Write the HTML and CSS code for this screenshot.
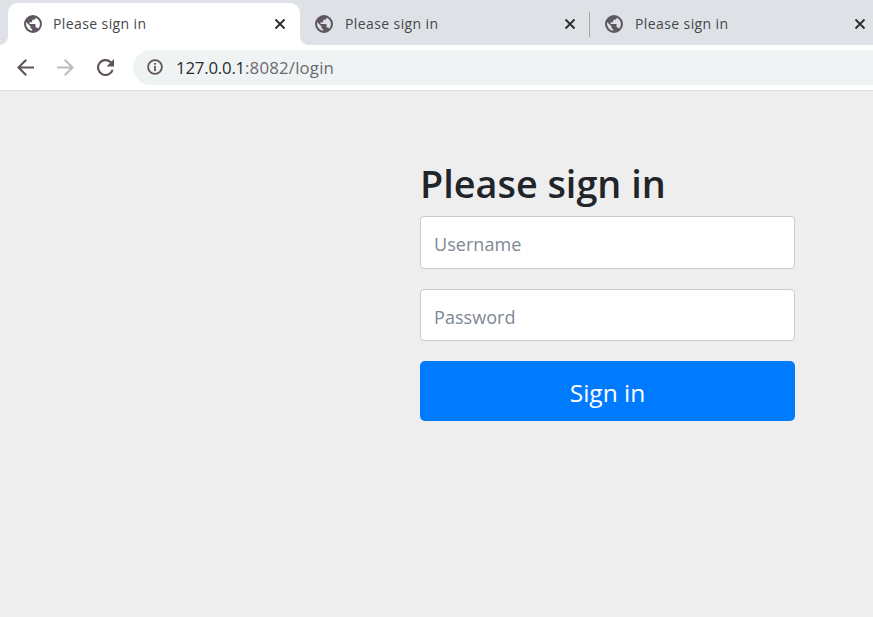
FILE: index.html
```html
<!DOCTYPE html>
<html lang="en">

<head>
    <meta charset="UTF-8">
    <meta name="viewport" content="width=device-width, initial-scale=1.0">
    <title>Please sign in</title>
    <link rel="stylesheet" href="styles.css">
</head>

<body>
    <svg class="defs" width="0" height="0">
        <symbol id="globe" viewBox="0 0 16 16">
            <path fill-rule="evenodd" d="M8 0a8 8 0 1 0 0 16A8 8 0 0 0 8 0zM1.800 8c0-.6.1-1.100.2-1.600L5.700 10.100v.8c0 .9.7 1.500 1.500 1.500v1.500A6.200 6.200 0 0 1 1.800 8zm10.800 4.200c-.2-.6-.8-1.100-1.500-1.100h-.8V8.800c0-.4-.3-.8-.8-.8H5.000V6.500h1.500c.4 0 .8-.3.8-.8V4.200h1.500c.9 0 1.500-.7 1.500-1.500v-.3a6.200 6.200 0 0 1 2.300 9.800z"/>
        </symbol>
        <symbol id="close" viewBox="0 0 12 12">
            <path d="M1.500 1.500l9 9M10.500 1.500l-9 9" fill="none" stroke="currentColor" stroke-width="1.800"/>
        </symbol>
    </svg>

    <div class="tabstrip">
        <div class="tab tab-active">
            <svg class="favicon"><use href="#globe"/></svg>
            <span class="tab-title">Please sign in</span>
            <svg class="tab-close"><use href="#close"/></svg>
        </div>
        <div class="tab tab-second">
            <svg class="favicon"><use href="#globe"/></svg>
            <span class="tab-title">Please sign in</span>
            <svg class="tab-close"><use href="#close"/></svg>
        </div>
        <div class="tab-sep"></div>
        <div class="tab tab-third">
            <svg class="favicon"><use href="#globe"/></svg>
            <span class="tab-title">Please sign in</span>
            <svg class="tab-close"><use href="#close"/></svg>
        </div>
    </div>

    <div class="toolbar">
        <svg class="nav-icon" viewBox="0 0 16 16"><path d="M16 7H3.800l5.600-5.600L8 0 0 8l8 8 1.400-1.400L3.800 9H16z" fill="#5f5559"/></svg>
        <svg class="nav-icon nav-forward" viewBox="0 0 16 16"><path d="M0 7h12.200L6.600 1.400 8 0l8 8-8 8-1.400-1.400L12.200 9H0z" fill="#bdbdbd"/></svg>
        <svg class="nav-icon nav-reload" viewBox="0 0 16 16"><path d="M13.650 2.350A8 8 0 1 0 15.740 10h-2.080a6 6 0 1 1-1.420-6.240L9 7h7V0z" fill="#5f5559"/></svg>
        <div class="omnibox">
            <svg class="info-icon" viewBox="0 0 16 16">
                <circle cx="8" cy="8" r="6.900" fill="none" stroke="#5f5559" stroke-width="1.800"/>
                <path d="M7.100 7h1.800v5H7.100zM7.100 4h1.800v1.800H7.100z" fill="#5f5559"/>
            </svg>
            <span class="url"><span class="url-host">127.0.0.1</span>:8082/login</span>
        </div>
    </div>

    <main class="page">
        <form class="signin">
            <h2 class="signin-heading">Please sign in</h2>
            <input class="field" type="text" placeholder="Username">
            <input class="field" type="password" placeholder="Password">
            <button class="submit" type="button">Sign in</button>
        </form>
    </main>
</body>

</html>
```

FILE: styles.css
```css
html, body {
    height: 100%;
}

body {
    margin: 0;
    display: flex;
    flex-direction: column;
    overflow: hidden;
    background: #eee;
    font-family: "Open Sans", "Noto Sans", sans-serif;
}

.defs {
    display: none;
}

/* browser chrome */
.tabstrip {
    display: flex;
    flex: none;
    height: 45px;
    padding-left: 8px;
    background: #dee1e6;
    box-sizing: border-box;
}

.tab {
    display: flex;
    align-items: center;
    flex: none;
    height: 45px;
    padding-top: 3px;
    box-sizing: border-box;
    color: #45484c;
}

.tab-active {
    position: relative;
    width: 292px;
    height: 42px;
    margin-top: 3px;
    padding-top: 0;
    padding-left: 16px;
    padding-right: 14px;
    background: #fff;
    border-radius: 10px 10px 0 0;
}

/* the little flares at the foot of the active tab */
.tab-active::before,
.tab-active::after {
    content: "";
    position: absolute;
    bottom: 0;
    width: 8px;
    height: 8px;
}

.tab-active::before {
    left: -8px;
    background: radial-gradient(circle at 0 0, transparent 7.500px, #fff 8px);
}

.tab-active::after {
    right: -8px;
    background: radial-gradient(circle at 100% 0, transparent 7.500px, #fff 8px);
}

.tab-active .favicon {
    margin-right: 11px;
}

.tab-second {
    width: 289px;
    padding-left: 15px;
    padding-right: 13px;
}

.tab-third {
    width: 283px;
    padding-left: 15px;
    padding-right: 7px;
}

.tab-sep {
    flex: none;
    width: 1px;
    height: 25px;
    margin-top: 12px;
    background: #a9a6a5;
}

.favicon {
    flex: none;
    width: 18px;
    height: 18px;
    margin-right: 12px;
    fill: #5f5860;
}

.tab-title {
    flex: 1;
    padding-bottom: 2px;
    font-size: 14px;
    letter-spacing: 0.4px;
}

.tab-close {
    flex: none;
    width: 12px;
    height: 12px;
    color: #2f2a2c;
}

.toolbar {
    display: flex;
    align-items: center;
    flex: none;
    height: 46px;
    padding: 0 0 1px 17px;
    background: #fff;
    border-bottom: 1px solid #e0e0e0;
    box-sizing: border-box;
}

.nav-icon {
    flex: none;
    width: 17px;
    height: 17px;
}

.nav-forward {
    margin-left: 23px;
}

.nav-reload {
    margin-left: 23px;
}

.omnibox {
    display: flex;
    align-items: center;
    flex: 1;
    height: 35px;
    margin-left: 19px;
    padding-left: 14px;
    background: #f0f3f4;
    border-radius: 18px 0 0 18px;
}

.info-icon {
    flex: none;
    width: 16px;
    height: 16px;
    margin-right: 13px;
}

.url {
    padding-top: 1px;
    font-size: 16.800px;
    letter-spacing: 0.200px;
    color: #6a6a6e;
}

.url-host {
    letter-spacing: -0.200px;
    color: #2b2b2e;
}

/* login form */
.page {
    flex: 1;
    padding: 70px 78px 0 420px;
    background: #eee;
}

.signin {
    display: flex;
    flex-direction: column;
}

.signin-heading {
    margin: 0 0 9px;
    font-size: 37.800px;
    font-weight: 600;
    line-height: 46px;
    color: #212529;
}

.field {
    height: 52.500px;
    margin-bottom: 20px;
    padding: 3px 13px 0;
    background: #fff;
    border: 1px solid #cbcbcb;
    border-radius: 4px;
    box-sizing: border-box;
    font-family: inherit;
    font-size: 18px;
    letter-spacing: 0.050px;
    color: #495057;
}

.field + .field {
    padding-top: 4px;
}

.field::placeholder {
    color: #7d8894;
    opacity: 1;
}

.submit {
    height: 60px;
    padding: 3px 0 0;
    background: #007bff;
    border: 0;
    border-radius: 5px;
    font-family: inherit;
    font-size: 24.500px;
    color: #fff;
}
```
